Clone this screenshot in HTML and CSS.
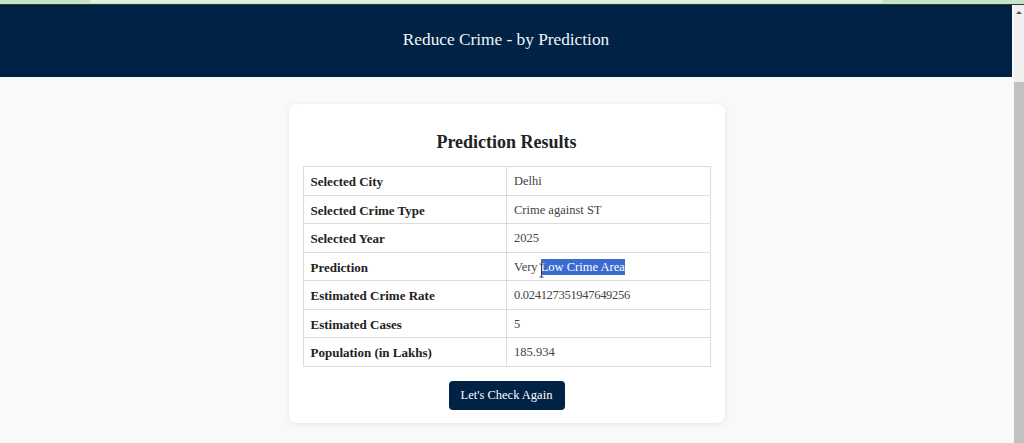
FILE: index.html
```html
<!DOCTYPE html>
<html lang="en">
<head>
<meta charset="utf-8">
<title>Reduce Crime - by Prediction</title>
<link rel="stylesheet" href="styles.css">
</head>
<body>
<div class="topstrip"><div class="topstrip-tab"></div></div>
<div class="window">
  <div class="page">
    <header class="hero">
      <h1 class="hero-title">Reduce Crime - by Prediction</h1>
    </header>
    <main class="content">
      <section class="card">
        <h2 class="card-title">Prediction Results</h2>
        <table class="results">
          <tr><th>Selected City</th><td>Delhi</td></tr>
          <tr><th>Selected Crime Type</th><td>Crime against ST</td></tr>
          <tr><th>Selected Year</th><td>2025</td></tr>
          <tr><th>Prediction</th><td><span class="sel-wrap">Very <span class="selected">Low Crime Area</span><svg class="ibeam" width="7" height="15" viewBox="0 0 7 15"><path d="M1.5 1h4M1.5 14h4M3.5 1v13" fill="none" stroke="#333" stroke-width="1"/></svg></span></td></tr>
          <tr><th>Estimated Crime Rate</th><td class="num">0.024127351947649256</td></tr>
          <tr><th>Estimated Cases</th><td>5</td></tr>
          <tr><th>Population (in Lakhs)</th><td>185.934</td></tr>
        </table>
        <div class="actions">
          <button class="btn" type="button">Let's Check Again</button>
        </div>
      </section>
    </main>
  </div>
  <div class="scrollbar">
    <div class="scroll-top"><span class="scroll-arrow"></span></div>
    <div class="scroll-thumb"></div>
  </div>
</div>
</body>
</html>
```

FILE: styles.css
```css
* { box-sizing: border-box; }

html, body {
  margin: 0;
  padding: 0;
  height: 443px;
  overflow: hidden;
}

body {
  font-family: "Liberation Serif", "Times New Roman", serif;
  background: #f8f9f9;
  color: #333;
}

.topstrip {
  height: 5px;
  background: #c6e3c6;
  border-bottom: 1px solid #2e3d34;
  padding-left: 90px;
  padding-right: 142px;
}

.topstrip-tab {
  height: 3px;
  background: #dff0df;
}

.window {
  display: flex;
  height: 438px;
}

.page {
  flex: 1;
  display: flex;
  flex-direction: column;
  background: #f8f9f9;
}

.hero {
  height: 72px;
  background: #002244;
  display: flex;
  align-items: center;
  justify-content: center;
  margin-right: 1px;
}

.hero-title {
  margin: 0;
  font-weight: normal;
  font-size: 17.3px;
  color: #eef6fa;
  padding-bottom: 2px;
}

.content {
  display: flex;
  justify-content: center;
  padding-top: 27px;
}

.card {
  width: 436px;
  background: #fff;
  border-radius: 8px;
  box-shadow: 0 1px 6px rgba(0, 0, 0, 0.08);
  padding: 14px 14px 13px;
}

.card-title {
  margin: 12px 0 12px;
  text-align: center;
  font-size: 18px;
  line-height: 24px;
  font-weight: bold;
  color: #222;
}

.results {
  width: 100%;
  border-collapse: collapse;
  table-layout: fixed;
  font-size: 12.5px;
}

.results th,
.results td {
  border: 1px solid #dcdcdc;
  padding: 7px 7px 5px;
  line-height: 15.5px;
  text-align: left;
}

.results th {
  font-weight: bold;
  font-size: 13px;
  color: #222;
}

.results td {
  color: #444;
}

.results td.num {
  letter-spacing: -0.3px;
}

.sel-wrap {
  position: relative;
}

.selected {
  background: #3b6bd0;
  color: #fff;
  padding: 1px 0;
}

.ibeam {
  position: absolute;
  left: 24px;
  top: 3px;
}

.actions {
  display: flex;
  justify-content: center;
  margin-top: 14px;
}

.btn {
  height: 29px;
  width: 116px;
  background: #002244;
  color: #fff;
  border: none;
  border-radius: 4px;
  font-family: inherit;
  font-size: 12.5px;
  padding: 0;
}

.scrollbar {
  width: 10px;
  display: flex;
  flex-direction: column;
  background: #c1c1c1;
  margin-left: 1px;
}

.scroll-top {
  height: 77px;
  background: #f0f0f0;
  display: flex;
  justify-content: center;
  padding-top: 6px;
}

.scroll-arrow {
  width: 0;
  height: 0;
  border-left: 3px solid transparent;
  border-right: 3px solid transparent;
  border-bottom: 3px solid #555;
}

.scroll-thumb {
  flex: 1;
  background: #c1c1c1;
}
```
